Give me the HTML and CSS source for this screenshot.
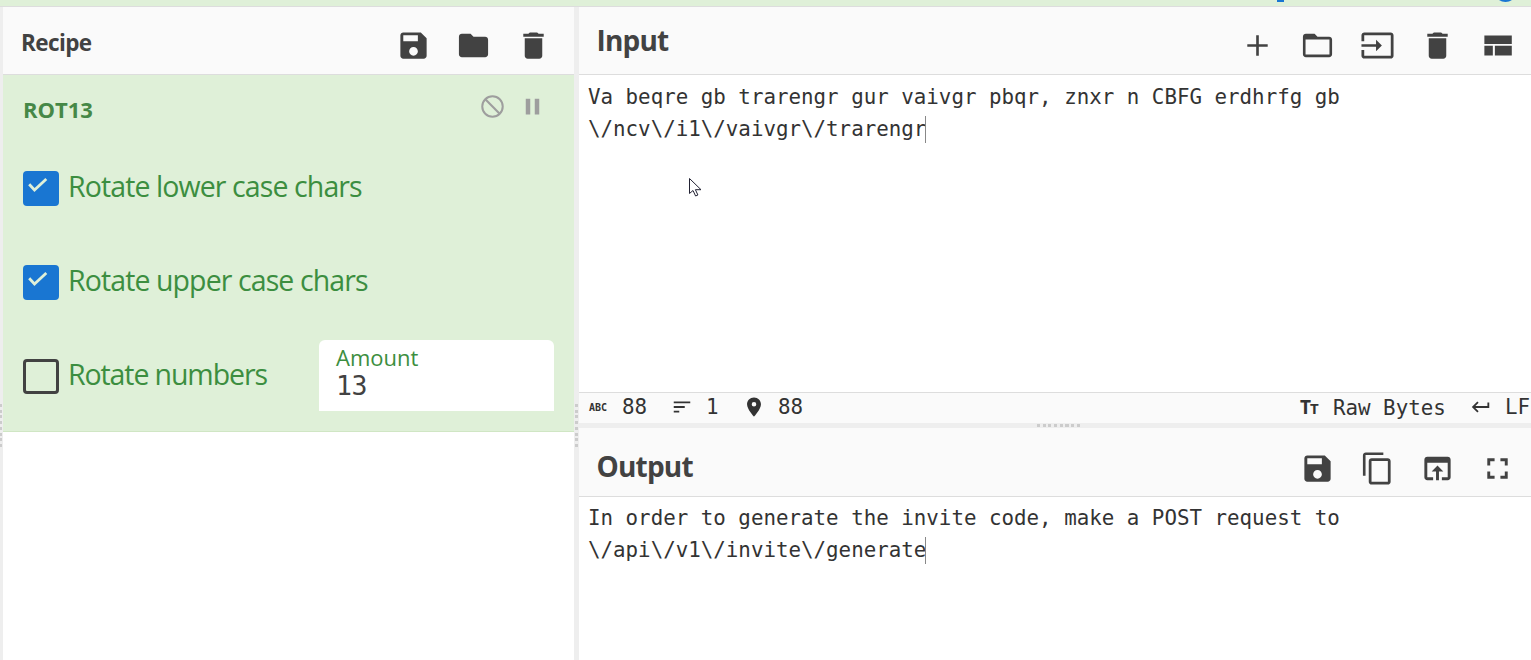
FILE: index.html
```html
<!DOCTYPE html>
<html lang="en">
<head>
<meta charset="utf-8">
<title>Recipe</title>
<link rel="stylesheet" href="styles.css">
</head>
<body>
<svg class="defs" aria-hidden="true">
  <symbol id="save" viewBox="0 0 24 24"><path d="M17 3H5c-1.11 0-2 .9-2 2v14c0 1.1.89 2 2 2h14c1.1 0 2-.9 2-2V7l-4-4zm-5 16c-1.66 0-3-1.34-3-3s1.34-3 3-3 3 1.34 3 3-1.34 3-3 3zm3-10H5V5h10v4z"/></symbol>
  <symbol id="folder" viewBox="0 0 24 24"><path d="M10 4H4c-1.1 0-1.99.9-1.99 2L2 18c0 1.1.9 2 2 2h16c1.1 0 2-.9 2-2V8c0-1.1-.9-2-2-2h-8l-2-2z"/></symbol>
  <symbol id="folder-open" viewBox="0 0 24 24"><path d="M20 6h-8l-2-2H4c-1.1 0-1.99.9-1.99 2L2 18c0 1.1.9 2 2 2h16c1.1 0 2-.9 2-2V8c0-1.1-.9-2-2-2zm.2 12.2H3.8V7.8h16.4v10.4z"/></symbol>
  <symbol id="trash" viewBox="0 0 24 24"><path d="M6 19c0 1.1.9 2 2 2h8c1.1 0 2-.9 2-2V7H6v12zM19 4h-3.5l-1-1h-5l-1 1H5v2h14V4z"/></symbol>
  <symbol id="add" viewBox="0 0 24 24"><path d="M19 12.9h-6.1V19h-1.8v-6.1H5v-1.8h6.1V5h1.8v6.1H19z"/></symbol>
  <symbol id="input" viewBox="0 0 24 24"><path d="M21 3.01H3c-1.1 0-2 .9-2 2V9h1.9V4.9h18.2v14.2H2.9V15H1v4.01c0 1.1.9 1.98 2 1.98h18c1.1 0 2-.88 2-1.98v-14c0-1.11-.9-2-2-2zM11 16l4-4-4-4v3.1H1v1.8h10v3z"/></symbol>
  <symbol id="layout" viewBox="0 0 24 24"><path d="M3 5.2h18.8v5.8H3zM3 12.2h5.8v6.6H3zM10.2 12.2h11.6v6.6H10.2z"/></symbol>
  <symbol id="copy" viewBox="0 0 24 24"><path d="M16 1H4c-1.1 0-2 .9-2 2v14h1.8V2.8H16V1zm3 4H8c-1.1 0-2 .9-2 2v14c0 1.1.9 2 2 2h11c1.1 0 2-.9 2-2V7c0-1.1-.9-2-2-2zm.1 16.1H7.9V6.9h11.2v14.2z"/></symbol>
  <symbol id="browser" viewBox="0 0 24 24"><path d="M19 4H5c-1.11 0-2 .9-2 2v12c0 1.1.89 2 2 2h4v-2H5V8h14v10h-4v2h4c1.1 0 2-.9 2-2V6c0-1.1-.89-2-2-2zm-7 6l-4 4h3v6h2v-6h3l-4-4z"/></symbol>
  <symbol id="full" viewBox="0 0 24 24"><path d="M7 14H5v5h5v-2H7v-3zm-2-4h2V7h3V5H5v5zm12 7h-3v2h5v-5h-2v3zM14 5v2h3v3h2V5h-5z"/></symbol>
  <symbol id="block" viewBox="0 0 24 24"><path d="M5.4 5.4l13.2 13.2" fill="none" stroke="currentColor" stroke-width="1.9"/><circle cx="12" cy="12" r="9.1" fill="none" stroke="currentColor" stroke-width="1.8"/></symbol>
  <symbol id="pause" viewBox="0 0 24 24"><path d="M6 19h4V5H6v14zm8-14v14h4V5h-4z"/></symbol>
  <symbol id="lines" viewBox="0 0 24 24"><path d="M3 18h6v-2H3v2zM3 6v2h18V6H3zm0 7h12v-2H3v2z"/></symbol>
  <symbol id="pin" viewBox="0 0 24 24"><path d="M12 1.5C7.6 1.5 4.4 4.8 4.4 9c0 5.5 7.6 13.5 7.6 13.5S19.600 14.500 19.600 9c0-4.200-3.200-7.500-7.600-7.500zm0 10a2.500 2.500 0 010-5 2.500 2.500 0 010 5z"/></symbol>
  <symbol id="return" viewBox="0 0 24 24"><path d="M19 7v4H5.830l3.580-3.590L8 6l-6 6 6 6 1.410-1.410L5.830 13H21V7z"/></symbol>
</svg>
<div class="banner"><i class="banner-mark"></i><i class="banner-dot"></i></div>
<main class="workspace">
  <div class="gutter edge"><i class="grip vertical"></i></div>
  <section class="recipe">
    <header class="bar">
      <h2 class="recipe-title">Recipe</h2>
      <div class="tools">
        <svg><use href="#save"/></svg><svg><use href="#folder"/></svg><svg><use href="#trash"/></svg>
      </div>
    </header>
    <article class="operation">
      <div class="op-head">
        <h3 class="op-title">ROT13</h3>
        <div class="op-tools"><svg><use href="#block"/></svg><svg><use href="#pause"/></svg></div>
      </div>
      <label class="option"><span class="box checked"><svg viewBox="0 0 36 35"><path d="M6.2 13.2l5.300 5.800L23.300 8"/></svg></span><span>Rotate lower case chars</span></label>
      <label class="option"><span class="box checked"><svg viewBox="0 0 36 35"><path d="M6.2 13.2l5.300 5.800L23.300 8"/></svg></span><span>Rotate upper case chars</span></label>
      <div class="last-row">
        <label class="option numbers"><span class="box"></span><span>Rotate numbers</span></label>
        <div class="amount"><span class="amount-label">Amount</span><span class="amount-value">13</span></div>
      </div>
    </article>
  </section>
  <div class="gutter"><i class="grip vertical"></i></div>
  <section class="io">
    <header class="bar">
      <h2 class="io-title">Input</h2>
      <div class="tools">
        <svg><use href="#add"/></svg><svg><use href="#folder-open"/></svg><svg><use href="#input"/></svg><svg><use href="#trash"/></svg><svg><use href="#layout"/></svg>
      </div>
    </header>
    <div class="editor">
      <div class="line">Va beqre gb trarengr gur vaivgr pbqr, znxr n CBFG erdhrfg gb</div>
      <div class="line">\/ncv\/i1\/vaivgr\/trarengr<i class="caret"></i></div>
      <svg class="pointer" viewBox="0 0 13 19"><path d="M.5.5v15l3.500-3 2.600 5.500 2.300-1-2.500-5.300H12z"/></svg>
    </div>
    <footer class="status">
      <span class="abc">ABC</span><span class="count">88</span>
      <svg class="s-lines"><use href="#lines"/></svg><span class="line-count">1</span>
      <svg class="s-pin"><use href="#pin"/></svg><span class="position">88</span>
      <span class="tt">T<small>T</small></span><span class="encoding">Raw Bytes</span>
      <svg class="s-return"><use href="#return"/></svg><span class="eol">LF</span>
    </footer>
    <div class="divider"><i class="grip horizontal"></i></div>
    <header class="bar output-bar">
      <h2 class="io-title">Output</h2>
      <div class="tools">
        <svg><use href="#save"/></svg><svg><use href="#copy"/></svg><svg><use href="#browser"/></svg><svg><use href="#full"/></svg>
      </div>
    </header>
    <div class="editor output-editor">
      <div class="line">In order to generate the invite code, make a POST request to</div>
      <div class="line">\/api\/v1\/invite\/generate<i class="caret"></i></div>
    </div>
  </section>
</main>
</body>
</html>
```
FILE: styles.css
```css
* { box-sizing: border-box; }
body {
  margin: 0;
  height: 660px;
  overflow: hidden;
  display: flex;
  flex-direction: column;
  background: #fff;
  color: #424242;
  font-family: "Open Sans", "Noto Sans", sans-serif;
}
h2, h3 { margin: 0; }
svg { display: block; fill: currentColor; flex: none; }
.defs { display: none; }
.banner {
  position: relative;
  flex: none;
  height: 7px;
  overflow: hidden;
  background: #dff0d8;
  border-bottom: 1px solid #ddd;
}
.banner-mark, .banner-dot { position: absolute; background: #1976d2; }
.banner-mark { left: 1277px; top: 0; width: 7px; height: 2px; }
.banner-dot { left: 1494px; top: -21px; width: 23px; height: 23px; border-radius: 50%; }
.workspace { flex: 1; min-height: 0; display: grid; grid-template-columns: 3px 571px 5px 952px; }
.gutter { background: #eee; position: relative; }
.grip { position: absolute; display: block; }
.grip.vertical {
  left: 1px; top: 397px; width: 3px; height: 43px;
  background: repeating-linear-gradient(#ccc 0 3px, transparent 3px 5.7px);
}
.edge .grip.vertical { left: -1px; }
.grip.horizontal {
  left: 458px; top: 1px; width: 43px; height: 3px;
  background: repeating-linear-gradient(90deg, #ccc 0 3px, transparent 3px 5.7px);
}
.recipe { min-width: 0; }
.bar {
  height: 68px;
  padding: 10px 16.3px 0 18px;
  display: flex;
  justify-content: space-between;
  background: #fafafa;
  border-bottom: 1px solid #ddd;
}
.tools { display: flex; gap: 25px; padding-top: 11.3px; }
.recipe .tools { padding-right: 6.9px; }
.tools svg { width: 35px; height: 35px; }
.recipe-title { font-size: 22.5px; line-height: 52px; letter-spacing: -0.6px; }
.io-title { font-size: 28px; line-height: 47px; letter-spacing: -0.8px; margin-left: -0.5px; }
.operation {
  height: 357px;
  padding: 0 20px;
  background: #dff0d8;
  border-bottom: 1px solid #d0e6c4;
  color: #3c8e40;
}
.op-head { height: 96px; padding-top: 15px; display: flex; justify-content: space-between; }
.op-title { font-size: 22px; line-height: 38px; color: #468847; }
.op-tools { display: flex; gap: 13px; padding: 2.5px 8px 0 0; color: #9e9e9e; }
.op-tools svg { width: 27px; height: 27px; }
.option { height: 35px; margin-bottom: 59px; display: flex; gap: 9px; font-size: 28.5px; line-height: 30px; letter-spacing: -0.9px; white-space: nowrap; }
.numbers { letter-spacing: -1.1px; }
.box { width: 36px; height: 35px; border: 3px solid #424242; border-radius: 4px; }
.box.checked { border: 0; background: #1976d2; }
.box svg { width: 36px; height: 35px; fill: none; stroke: #dff0d8; stroke-width: 2.8; }
.last-row { display: flex; justify-content: space-between; }
.amount {
  width: 235px; height: 71px; margin-top: -19px; padding: 4px 17px;
  display: flex; flex-direction: column;
  background: #fff; border-radius: 6px 6px 0 0;
}
.amount-label { font-size: 22px; line-height: 27px; }
.amount-value { color: #424242; font: 26.5px/30px "DejaVu Sans Mono", monospace; letter-spacing: -0.5px; }
.io { min-width: 0; display: grid; grid-template-rows: 68px 317px 31px 5px 69px 1fr; }
.divider { background: #eee; position: relative; }
.output-bar { height: 69px; padding-top: 15px; }
.output-bar .tools { padding-top: 7.5px; }
.editor {
  position: relative;
  padding: 6px 9px;
  font: 20.82px/32px "DejaVu Sans Mono", monospace;
  color: #333;
}
.output-editor { padding-top: 5px; }
.line { height: 32px; white-space: pre; }
.caret { display: inline-block; width: 1px; height: 27px; margin-left: -1px; vertical-align: -7px; background: #888; }
.pointer { position: absolute; left: 110px; top: 103px; width: 13px; height: 19px; fill: #fff; stroke: #223; stroke-width: 1; }
.status {
  display: flex;
  align-items: center;
  padding: 0 0 2px 10px;
  overflow: hidden;
  background: #fafafa;
  border-top: 1px solid #ddd;
  color: #333;
  font: 20.82px/28px "DejaVu Sans Mono", monospace;
  white-space: nowrap;
}
.status > * { flex: none; }
.status svg { width: 22px; height: 22px; }
.abc { width: 33px; padding-top: 1px; font: bold 10px/12px "DejaVu Sans Mono", monospace; }
.count { width: 49px; }
.line-count { margin-left: 13px; width: 37px; }
.position { margin-left: 13px; width: 522px; }
.tt { width: 33px; padding-top: 1px; font: bold 19px/22px "Open Sans", sans-serif; letter-spacing: -1px; }
.tt small { font-size: 15px; }
.encoding { width: 137px; padding-top: 2px; }
.eol { margin-left: 13px; }
```
